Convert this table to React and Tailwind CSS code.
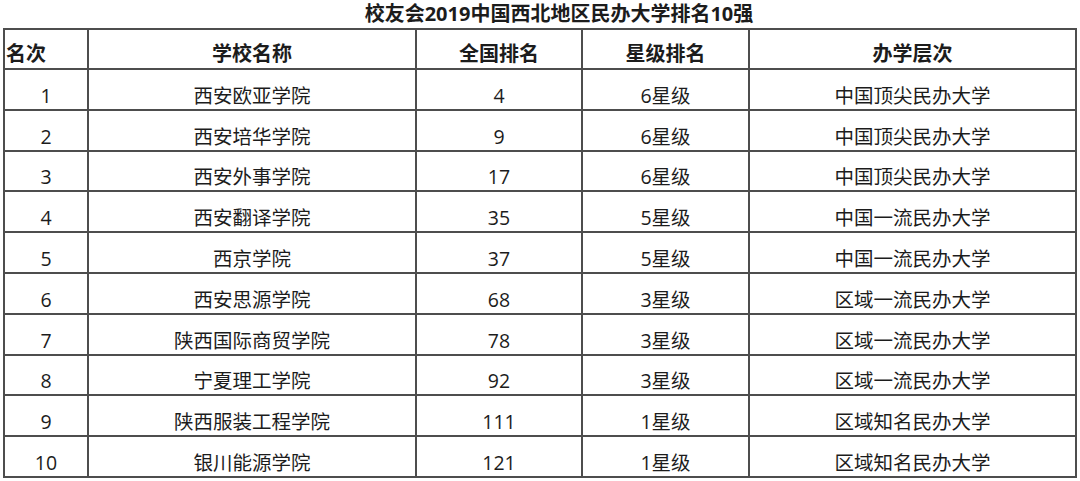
import React from "react";

const ROWS = [
  ["1", "西安欧亚学院", "4", "6星级", "中国顶尖民办大学"],
  ["2", "西安培华学院", "9", "6星级", "中国顶尖民办大学"],
  ["3", "西安外事学院", "17", "6星级", "中国顶尖民办大学"],
  ["4", "西安翻译学院", "35", "5星级", "中国一流民办大学"],
  ["5", "西京学院", "37", "5星级", "中国一流民办大学"],
  ["6", "西安思源学院", "68", "3星级", "区域一流民办大学"],
  ["7", "陕西国际商贸学院", "78", "3星级", "区域一流民办大学"],
  ["8", "宁夏理工学院", "92", "3星级", "区域一流民办大学"],
  ["9", "陕西服装工程学院", "111", "1星级", "区域知名民办大学"],
  ["10", "银川能源学院", "121", "1星级", "区域知名民办大学"],
];

const HEAD = ["名次", "学校名称", "全国排名", "星级排名", "办学层次"];
const WIDTHS = ["w-[84px]", "w-[328px]", "w-[166px]", "w-[167px]", "w-[327px]"];

export default function App() {
  return (
    <div className="w-[1080px] h-[481px] bg-white text-[#1c1c1c] overflow-hidden font-['Open_Sans','Noto_Sans_CJK_SC',sans-serif]">
      <div className="h-[28px] flex justify-center pl-[38px] pt-[1px]">
        <div className="text-[20px] leading-[26px] font-bold">校友会2019中国西北地区民办大学排名10强</div>
      </div>
      <table className="ml-[3px] w-[1073px] border-collapse table-fixed">
        <colgroup>
          {WIDTHS.map((w, i) => <col key={i} className={w} />)}
        </colgroup>
        <thead>
          <tr className="h-[40px]">
            {HEAD.map((h, i) => (
              <th key={i} className={`border-2 border-[#4d4d4d] align-bottom pb-[4px] text-[20px] leading-[20px] font-bold ${i === 0 ? "text-left pl-[1px]" : "text-center"}`}>{h}</th>
            ))}
          </tr>
        </thead>
        <tbody>
          {ROWS.map((r, ri) => (
            <tr key={ri} className="h-[40.8px]">
              {r.map((c, ci) => (
                <td key={ci} className="border-2 border-[#4d4d4d] align-bottom pb-[3px] text-center text-[19.5px] leading-[20px]">{c}</td>
              ))}
            </tr>
          ))}
        </tbody>
      </table>
    </div>
  );
}
